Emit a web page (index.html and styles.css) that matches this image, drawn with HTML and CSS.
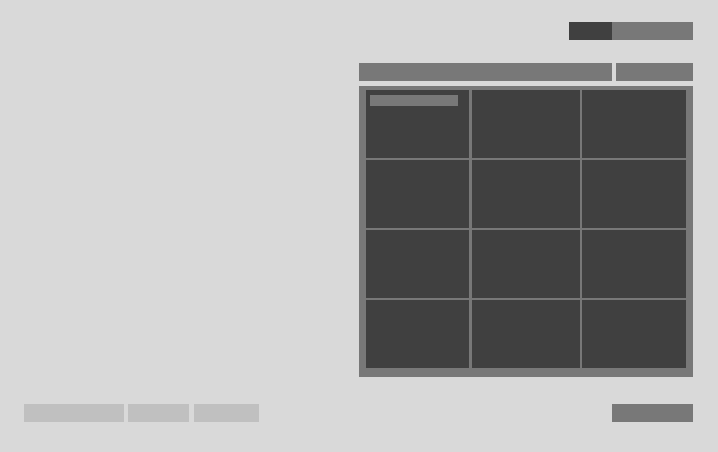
FILE: index.html
```html
<!DOCTYPE html>
<html lang="en">
<head>
<meta charset="utf-8">
<title>Grid</title>
<link rel="stylesheet" href="styles.css">
</head>
<body>
<div class="page">
  <div class="main">
    <div class="side">
      <div class="toggle">
        <div class="toggle-on"></div>
        <div class="toggle-off"></div>
      </div>
      <div class="header">
        <div class="header-main"></div>
        <div class="header-side"></div>
      </div>
      <div class="panel">
        <div class="grid">
          <div class="cell"><div class="label"></div></div>
          <div class="cell"></div>
          <div class="cell"></div>
          <div class="cell"></div>
          <div class="cell"></div>
          <div class="cell"></div>
          <div class="cell"></div>
          <div class="cell"></div>
          <div class="cell"></div>
          <div class="cell"></div>
          <div class="cell"></div>
          <div class="cell"></div>
        </div>
      </div>
    </div>
  </div>
  <div class="footer">
    <div class="footer-left">
      <div class="tab tab-a"></div>
      <div class="tab tab-b"></div>
      <div class="tab tab-c"></div>
    </div>
    <div class="action"></div>
  </div>
</div>
</body>
</html>
```
FILE: styles.css
```css
html, body {
  margin: 0;
  padding: 0;
  background: #d9d9d9;
  font-family: "Liberation Sans", Arial, sans-serif;
}
.page {
  width: 718px;
  height: 452px;
  box-sizing: border-box;
  padding: 22px 25px 0 24px;
  display: flex;
  flex-direction: column;
}
.main {
  display: flex;
  justify-content: flex-end;
}
.side {
  width: 334px;
  display: flex;
  flex-direction: column;
  align-items: flex-end;
}
.toggle {
  display: flex;
  height: 18px;
}
.toggle-on {
  width: 43px;
  background: #404040;
}
.toggle-off {
  width: 81px;
  background: #787878;
}
.header {
  margin-top: 23px;
  width: 334px;
  height: 18px;
  display: flex;
  gap: 4px;
}
.header-main {
  width: 253px;
  background: #787878;
}
.header-side {
  flex: 1;
  background: #787878;
}
.panel {
  margin-top: 5px;
  width: 334px;
  box-sizing: border-box;
  padding: 4px 7px 9px 7px;
  background: #787878;
}
.grid {
  display: grid;
  grid-template-columns: 103px 109px 104px;
  grid-auto-rows: 68px;
  gap: 2px;
}
.cell {
  background: #404040;
  padding: 5px 0 0 4px;
  box-sizing: border-box;
}
.cell:nth-child(3n+2) {
  margin-left: 1px;
}
.label {
  width: 88px;
  height: 11px;
  background: #787878;
}
.footer {
  margin-top: 27px;
  height: 18px;
  display: flex;
  justify-content: space-between;
}
.footer-left {
  display: flex;
}
.tab {
  background: #c0c0c0;
}
.tab-a { width: 100px; }
.tab-b { width: 61px; margin-left: 4px; }
.tab-c { width: 65px; margin-left: 5px; }
.action {
  width: 81px;
  background: #787878;
}
```
